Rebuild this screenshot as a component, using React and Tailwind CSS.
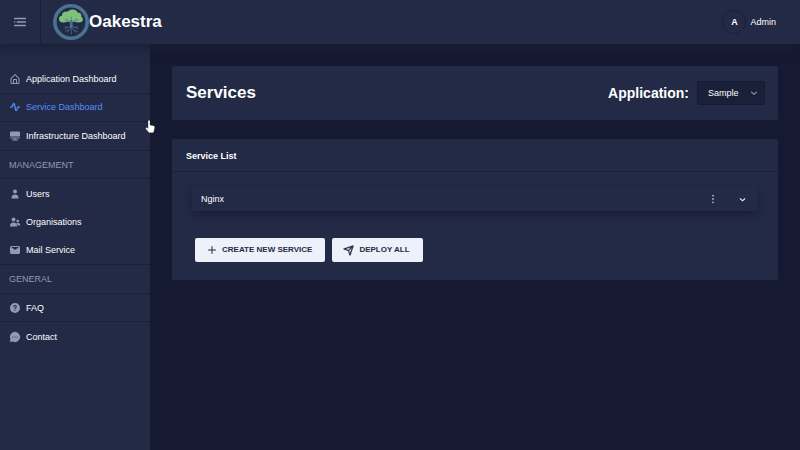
import clsx from "clsx";

const Icon = ({ className = "size-3", children }) => (
  <svg viewBox="0 0 24 24" fill="currentColor" fillRule="evenodd" className={clsx("shrink-0", className)} aria-hidden="true">
    {children}
  </svg>
);

const icons = {
  home: (
    <path d="M20.42 10.18L12.71 2.3a1 1 0 0 0-1.42 0l-7.71 7.89A2 2 0 0 0 3 11.62V20a2 2 0 0 0 1.89 2h14.22A2 2 0 0 0 21 20v-8.38a2.07 2.07 0 0 0-.58-1.44zM10 20v-6h4v6zm9 0h-3v-7a1 1 0 0 0-1-1H9a1 1 0 0 0-1 1v7H5v-8.42l7-7.15 7 7.19z" />
  ),
  activity: (
    <path
      d="M14.33 20h-.21a2 2 0 0 1-1.76-1.58L9.68 6l-2.76 6.4A1 1 0 0 1 6 13H3a1 1 0 0 1 0-2h2.34l2.51-5.79a2 2 0 0 1 3.79.38L14.32 18l2.76-6.38A1 1 0 0 1 18 11h3a1 1 0 0 1 0 2h-2.34l-2.51 5.79A2 2 0 0 1 14.33 20z"
      stroke="currentColor"
      strokeWidth=".6"
    />
  ),
  monitor: (
    <>
      <path d="M4 3h16a2 2 0 0 1 2 2v8H2V5a2 2 0 0 1 2-2z" />
      <path d="M2 15h20a2.500 2.500 0 0 1-2.500 2H13v2h4a1 1 0 0 1 0 2H7a1 1 0 0 1 0-2h4v-2H4.500A2.500 2.500 0 0 1 2 15z" />
    </>
  ),
  person: (
    <>
      <circle cx="12" cy="7" r="4" />
      <path d="M18 21a1 1 0 0 0 1-1 7 7 0 0 0-14 0 1 1 0 0 0 1 1z" />
    </>
  ),
  people: (
    <>
      <circle cx="9" cy="7" r="4" />
      <circle cx="17.5" cy="10" r="2.7" />
      <path d="M2 20a7 7 0 0 1 14 0 1 1 0 0 1-1 1H3a1 1 0 0 1-1-1z" />
      <path d="M14.5 14.5A5 5 0 0 1 22.5 18a1 1 0 0 1-1 1h-4a8 8 0 0 0-3-4.500z" />
    </>
  ),
  mail: (
    <path d="M19 4H5a3 3 0 0 0-3 3v10a3 3 0 0 0 3 3h14a3 3 0 0 0 3-3V7a3 3 0 0 0-3-3zm0 3l-6.5 4.47a1 1 0 0 1-1 0L5 7V6h14z" />
  ),
  question: (
    <path d="M12 2a10 10 0 1 0 10 10A10 10 0 0 0 12 2zm0 16a1 1 0 1 1 1-1 1 1 0 0 1-1 1zm1-5.16V14a1 1 0 0 1-2 0v-2a1 1 0 0 1 1-1 1.5 1.5 0 1 0-1.5-1.5 1 1 0 0 1-2 0 3.5 3.5 0 1 1 4.5 3.34z" />
  ),
  message: (
    <>
      <path d="M19.07 4.93a10 10 0 0 0-16.28 11 1.06 1.06 0 0 1 .09.64L2 20.8a1 1 0 0 0 .27.91A1 1 0 0 0 3 22h.2l4.28-.86a1.26 1.26 0 0 1 .64.09 10 10 0 0 0 10.95-16.3z" />
      <g fill="#222a45">
        <circle cx="7.5" cy="12" r="1.2" />
        <circle cx="12" cy="12" r="1.2" />
        <circle cx="16.5" cy="12" r="1.2" />
      </g>
    </>
  ),
  menu: (
    <>
      <circle cx="4" cy="12" r="1.2" />
      <rect x="7" y="10.8" width="14" height="2.4" rx="1" />
      <rect x="3" y="16" width="18" height="2.4" rx="1" />
      <rect x="3" y="5.6" width="18" height="2.4" rx="1" />
    </>
  ),
  plus: <path d="M19 11h-6V5a1 1 0 0 0-2 0v6H5a1 1 0 0 0 0 2h6v6a1 1 0 0 0 2 0v-6h6a1 1 0 0 0 0-2z" />,
  plane: (
    <path
      d="M21 4a1.31 1.31 0 0 0-.06-.27v-.09a1 1 0 0 0-.2-.3 1 1 0 0 0-.29-.19h-.09a.86.86 0 0 0-.31-.15H20a1 1 0 0 0-.3 0l-18 6a1 1 0 0 0 0 1.9l8.53 2.84 2.84 8.53a1 1 0 0 0 1.9 0l6-18A1 1 0 0 0 21 4zm-4.7 2.29l-5.57 5.57L5.16 10zM14 18.84l-1.86-5.57 5.57-5.57z"
      stroke="currentColor"
      strokeWidth=".5"
    />
  ),
  chevron: (
    <path
      d="M12 16a1 1 0 0 1-.64-.23l-6-5a1 1 0 1 1 1.28-1.54L12 13.71l5.36-4.32a1 1 0 0 1 1.41.15 1 1 0 0 1-.14 1.46l-6 4.83A1 1 0 0 1 12 16z"
      stroke="currentColor"
    />
  ),
  dots: (
    <>
      <circle cx="12" cy="4" r="2.2" />
      <circle cx="12" cy="12" r="2.2" />
      <circle cx="12" cy="20" r="2.2" />
    </>
  ),
};

const Logo = () => (
  <svg viewBox="0 0 36 36" className="size-9 shrink-0" aria-hidden="true">
    <circle cx="18" cy="18" r="16.2" fill="#222a48" stroke="#4b7391" strokeWidth="3.6" />
    <g fill="#7dc27a">
      <ellipse cx="10.5" cy="15" rx="4.5" ry="3.4" />
      <ellipse cx="13.5" cy="11" rx="4.5" ry="3.6" />
      <ellipse cx="19.5" cy="9.5" rx="5.4" ry="4" />
      <ellipse cx="24.5" cy="12" rx="4" ry="3.6" />
      <ellipse cx="25.5" cy="15.5" rx="4.4" ry="3" />
      <ellipse cx="18" cy="14.5" rx="6.5" ry="3.8" />
    </g>
    <g fill="none" stroke="#4b7391" strokeLinecap="round">
      <path d="M18.3 17v6" strokeWidth="2.6" />
      <path d="M18 19l-4.5-4M18.5 19l5-4M18.3 17v-4M14.5 16h-2.5M22.5 16h3" strokeWidth=".7" />
      <path
        d="M18 22l-6 2.5M18 23l-3.5 5M18.3 23v7M18.5 23l4 5M18.500 22l6.5 2.5M15 23.3l-3-.3M15.5 26l-3 1M21.5 23.3l3-.5M21 26l3.500 1.5"
        strokeWidth=".7"
      />
    </g>
  </svg>
);

const menuItems = [
  { title: "Application Dashboard", icon: "home" },
  { title: "Service Dashboard", icon: "activity", active: true },
  { title: "Infrastructure Dashboard", icon: "monitor" },
  { title: "MANAGEMENT", group: true },
  { title: "Users", icon: "person", noLine: true },
  { title: "Organisations", icon: "people", noLine: true },
  { title: "Mail Service", icon: "mail" },
  { title: "GENERAL", group: true },
  { title: "FAQ", icon: "question" },
  { title: "Contact", icon: "message", noLine: true },
];

const Header = () => (
  <header className="relative z-10 flex h-11 items-center bg-[#222a45] shadow-[0_4px_8px_0_#1a1f33]">
    <div className="flex h-full w-[41px] items-center justify-center border-r border-[#1a2038]">
      <button aria-label="Toggle menu" className="text-[#8f9bb3]">
        <Icon className="size-4">{icons.menu}</Icon>
      </button>
    </div>
    <a href="#" className="ml-3 flex items-center text-[17px] leading-6 font-bold">
      <Logo />
      Oakestra
    </a>
    <div className="mr-6 ml-auto flex items-center gap-1">
      <span className="flex size-6 items-center justify-center rounded-full border border-[#1a2038] text-[9px] font-bold">
        A
      </span>
      <span>Admin</span>
    </div>
  </header>
);

const Sidebar = () => (
  <nav className="w-[150px] shrink-0 bg-[#222a45] pt-[21px]">
    <ul className="grid h-[286px] auto-rows-fr">
      {menuItems.map(({ title, icon, group, active, noLine }) => (
        <li key={title} className={clsx("flex items-center px-[9px]", !noLine && "border-b border-[#1a2038]")}>
          {group ? (
            <span className="text-[#8f9bb3]">{title}</span>
          ) : (
            <a href="#" className={clsx("flex items-center gap-[5px]", active && "text-[#598bff]")}>
              <Icon className={clsx("size-3", !active && "text-[#8f9bb3]")}>{icons[icon]}</Icon>
              {title}
            </a>
          )}
        </li>
      ))}
    </ul>
  </nav>
);

const ActionButton = ({ icon, children }) => (
  <button className="flex h-6 items-center gap-1 rounded-xs bg-[#edf1fa] pr-[13px] pl-[11px] text-[8px] font-bold text-[#222b45]">
    <Icon className="size-3">{icons[icon]}</Icon>
    {children}
  </button>
);

const App = () => {
  return (
    <div className="flex min-h-screen flex-col bg-[#151931] font-['Liberation_Sans',Arial,sans-serif] text-[9px] leading-3 text-white">
      <Header />
      <div className="flex grow">
        <Sidebar />
        <main className="grow px-[22px] pt-[22px]">
          <section className="flex h-[54px] items-center rounded-xs bg-[#222a45] pr-[13px] pl-[14px]">
            <h1 className="text-[17px] leading-6 font-bold">Services</h1>
            <label htmlFor="application" className="mr-2 ml-auto text-[14px] leading-6 font-bold">
              Application:
            </label>
            <div className="relative">
              <select
                id="application"
                className="h-6 w-[68px] appearance-none rounded-xs border border-[#151b35] bg-[#192038] pl-[10px] text-[9px]"
              >
                <option>Sample</option>
              </select>
              <span className="pointer-events-none absolute top-[7px] right-[6px] text-[#8f9bb3]">
                <Icon className="size-[10px]">{icons.chevron}</Icon>
              </span>
            </div>
          </section>

          <section className="mt-[19px] rounded-xs bg-[#222a45]">
            <h2 className="border-b border-[#1a2038] px-[14px] pt-[11px] pb-[9px] font-bold">Service List</h2>
            <div className="px-5 pt-[15px] pb-[18px]">
              <div className="flex h-6 items-center rounded-xs bg-[#222a45] pr-[11px] pl-[9px] shadow-[0_4px_8px_0_#1a1f33]">
                <span className="grow">Nginx</span>
                <button aria-label="Service options" className="mr-5 text-[#a9b4cc]">
                  <Icon className="size-[10px]">{icons.dots}</Icon>
                </button>
                <button aria-label="Expand">
                  <Icon className="size-[9px]">{icons.chevron}</Icon>
                </button>
              </div>
              <div className="mt-[27px] flex gap-[7px] px-[3px]">
                <ActionButton icon="plus">CREATE NEW SERVICE</ActionButton>
                <ActionButton icon="plane">DEPLOY ALL</ActionButton>
              </div>
            </div>
          </section>
        </main>
      </div>
      <svg viewBox="0 0 10 14" className="pointer-events-none absolute top-[120px] left-[145px] z-20 h-[14px] w-[10px]" aria-hidden="true">
        <path
          d="M3 1.2a1 1 0 0 1 2 0V5l3.5.8a1.5 1.5 0 0 1 1.2 1.7L9 11l-.7 1.8H4L1 9.2C0 8 .8 7 2 7.6l1 .8z"
          fill="#fff"
          stroke="#222"
          strokeWidth=".3"
        />
      </svg>
    </div>
  );
};

export default App;
